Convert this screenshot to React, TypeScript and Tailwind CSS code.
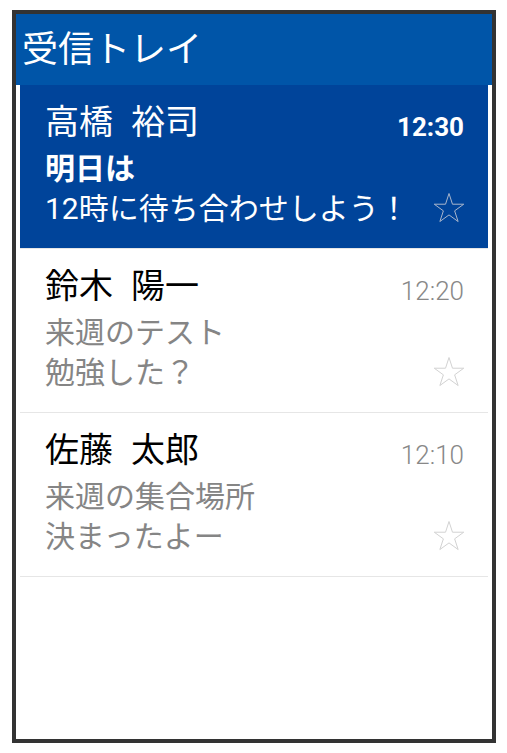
import React from 'react';

type Mail = {
  from: [string, string];
  subject: string;
  body: string;
  time: string;
  unread?: boolean;
};

const mails: Mail[] = [
  { from: ['高橋', '裕司'], subject: '明日は', body: '12時に待ち合わせしよう！', time: '12:30', unread: true },
  { from: ['鈴木', '陽一'], subject: '来週のテスト', body: '勉強した？', time: '12:20' },
  { from: ['佐藤', '太郎'], subject: '来週の集合場所', body: '決まったよー', time: '12:10' },
];

const Star: React.FC<{ className?: string }> = ({ className }) => (
  <svg width="30" height="30" viewBox="0 0 30 30" className={className}>
    <polygon
      points="15,0.5 18.48,11.21 29.74,11.21 20.63,17.83 24.11,28.54 15,21.92 5.89,28.54 9.37,17.83 0.26,11.21 11.52,11.21"
      fill="none"
      stroke="currentColor"
      strokeWidth="1"
    />
  </svg>
);

const MailRow: React.FC<{ mail: Mail }> = ({ mail }) => {
  const active = mail.unread;
  return (
    <li
      className={
        active
          ? 'bg-[#00449a] border-b border-[#e6e6e6] pt-[15px] pb-[19px] pl-[25px] pr-6'
          : 'bg-white border-b border-[#e6e6e6] pt-[15px] pb-[19px] pl-[25px] pr-6'
      }
    >
      <div className="flex items-baseline justify-between">
        <span
          className={
            active
              ? 'flex gap-[18px] text-[34px] leading-[44px] text-white'
              : 'flex gap-[18px] text-[34px] leading-[44px] text-black'
          }
        >
          <span>{mail.from[0]}</span>
          <span>{mail.from[1]}</span>
        </span>
        <span
          className={
            active
              ? 'relative top-[2px] text-[26px] leading-[44px] font-bold text-white'
              : 'relative top-[2px] text-[26px] leading-[44px] font-light text-[#888888]'
          }
        >
          {mail.time}
        </span>
      </div>
      <div className="mt-[2px] flex items-end justify-between">
        <div className={active ? 'text-[30px] leading-[40px] text-white' : 'text-[30px] leading-[40px] text-[#858585]'}>
          <p className={active ? 'font-bold' : ''}>{mail.subject}</p>
          <p>{mail.body}</p>
        </div>
        <Star className={active ? 'mb-[6px] text-[#a9b6cc]' : 'mb-[6px] text-[#d2d2d2]'} />
      </div>
    </li>
  );
};

export default function App() {
  return (
    <div
      className="min-h-[753px] bg-white pt-[10px] pl-[12px]"
      style={{ fontFamily: 'Roboto, "Noto Sans CJK JP", sans-serif' }}
    >
      <div className="w-[484px] h-[733px] border-4 border-[#333333] bg-white flex flex-col">
        <header className="h-[71px] bg-[#0055a8] flex items-center pl-[6px]">
          <h1 className="text-[36px] leading-none text-white font-normal">受信トレイ</h1>
        </header>
        <ul className="mx-1">
          {mails.map((m) => (
            <MailRow key={m.time} mail={m} />
          ))}
        </ul>
      </div>
    </div>
  );
}
